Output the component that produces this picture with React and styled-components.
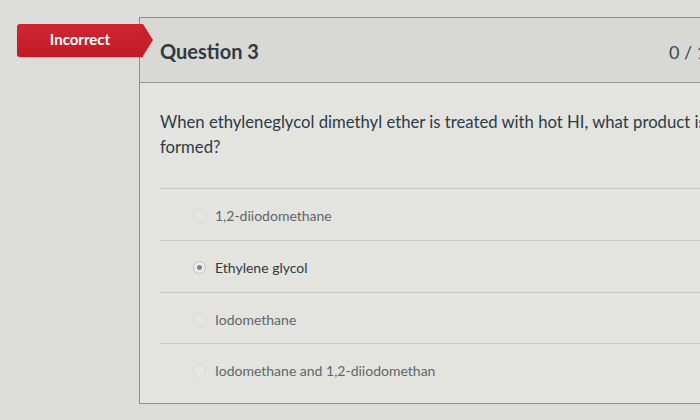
import React from "react";
import styled, { createGlobalStyle } from "styled-components";

const Global = createGlobalStyle`
  html, body {
    margin: 0;
    padding: 0;
    overflow: hidden;
    background: #dcdcd9;
    font-family: Lato, "Open Sans", "Liberation Sans", sans-serif;
  }
  #root { width: 700px; height: 420px; overflow: hidden; }
`;

const Page = styled.div`
  position: relative;
  width: 700px;
  height: 420px;
  padding: 17px 0 0 139px;
  box-sizing: border-box;
`;

const Card = styled.section`
  width: 620px;
  height: 387px;
  border: 1px solid #8f8f8d;
  background: #e3e3e0;
  box-sizing: border-box;
`;

const Header = styled.header`
  display: flex;
  align-items: center;
  justify-content: space-between;
  height: 64px;
  padding: 0 22px 0 20px;
  background: #d8d8d5;
  border-bottom: 1px solid #979795;
  color: #2d3b45;
`;

const Title = styled.h2`
  margin: 0;
  padding-top: 2px;
  font-size: 20px;
  font-weight: 700;
`;

const Points = styled.span`
  font-size: 18px;
  color: #3c4650;
  padding-top: 4px;
`;

const Body = styled.div`
  padding: 27px 20px 0 20px;
`;

const QuestionText = styled.p`
  margin: 0 0 28px;
  width: 580px;
  font-size: 16.7px;
  line-height: 25px;
  color: #2d3b45;
`;

const Answers = styled.ul`
  list-style: none;
  margin: 0;
  padding: 0;
`;

const Answer = styled.li`
  display: flex;
  align-items: center;
  gap: 9px;
  height: 52px;
  padding: 2px 0 0 33px;
  box-sizing: border-box;
  border-top: 1px solid #c9c9c6;
  font-size: 14px;
  color: ${(p) => (p.$selected ? "#2d3b45" : "#62666a")};
  &:nth-child(3) { height: 51px; }
`;

const Radio = styled.span`
  position: relative;
  width: 11px;
  height: 11px;
  border-radius: 50%;
  border: 1px solid ${(p) => (p.$selected ? "#c2c2c0" : "#d6d6d3")};
  background: ${(p) => (p.$selected ? "#ececea" : "#e6e6e3")};
  flex: none;
  &::after {
    content: "";
    display: ${(p) => (p.$selected ? "block" : "none")};
    position: absolute;
    left: 3px;
    top: 3px;
    width: 5px;
    height: 5px;
    border-radius: 50%;
    background: #7f8489;
  }
`;

const Badge = styled.div`
  position: absolute;
  left: 17px;
  top: 24px;
  width: 126px;
  height: 33px;
  display: flex;
  align-items: center;
  justify-content: center;
  padding-bottom: 3px;
  box-sizing: border-box;
  background: linear-gradient(#d0262f, #bf1b26);
  border-radius: 3px 0 0 3px;
  color: #fff;
  font-size: 15px;
  font-weight: 700;
  box-shadow: 0 1px 1px rgba(0,0,0,0.15);
  &::after {
    content: "";
    position: absolute;
    right: -10px;
    top: 0;
    border-top: 16.5px solid transparent;
    border-bottom: 16.5px solid transparent;
    border-left: 10px solid #c82029;
  }
`;

const answers = [
  { text: "1,2-diiodomethane" },
  { text: "Ethylene glycol", selected: true },
  { text: "Iodomethane" },
  { text: "Iodomethane and 1,2-diiodomethan" },
];

export default function App() {
  return (
    <>
      <Global />
      <Page>
        <Card>
          <Header>
            <Title>Question 3</Title>
            <Points>0 / 1 pts</Points>
          </Header>
          <Body>
            <QuestionText>
              When ethyleneglycol dimethyl ether is treated with hot HI, what product is formed?
            </QuestionText>
            <Answers>
              {answers.map((a) => (
                <Answer key={a.text} $selected={a.selected}>
                  <Radio $selected={a.selected} />
                  {a.text}
                </Answer>
              ))}
            </Answers>
          </Body>
        </Card>
        <Badge>Incorrect</Badge>
      </Page>
    </>
  );
}
